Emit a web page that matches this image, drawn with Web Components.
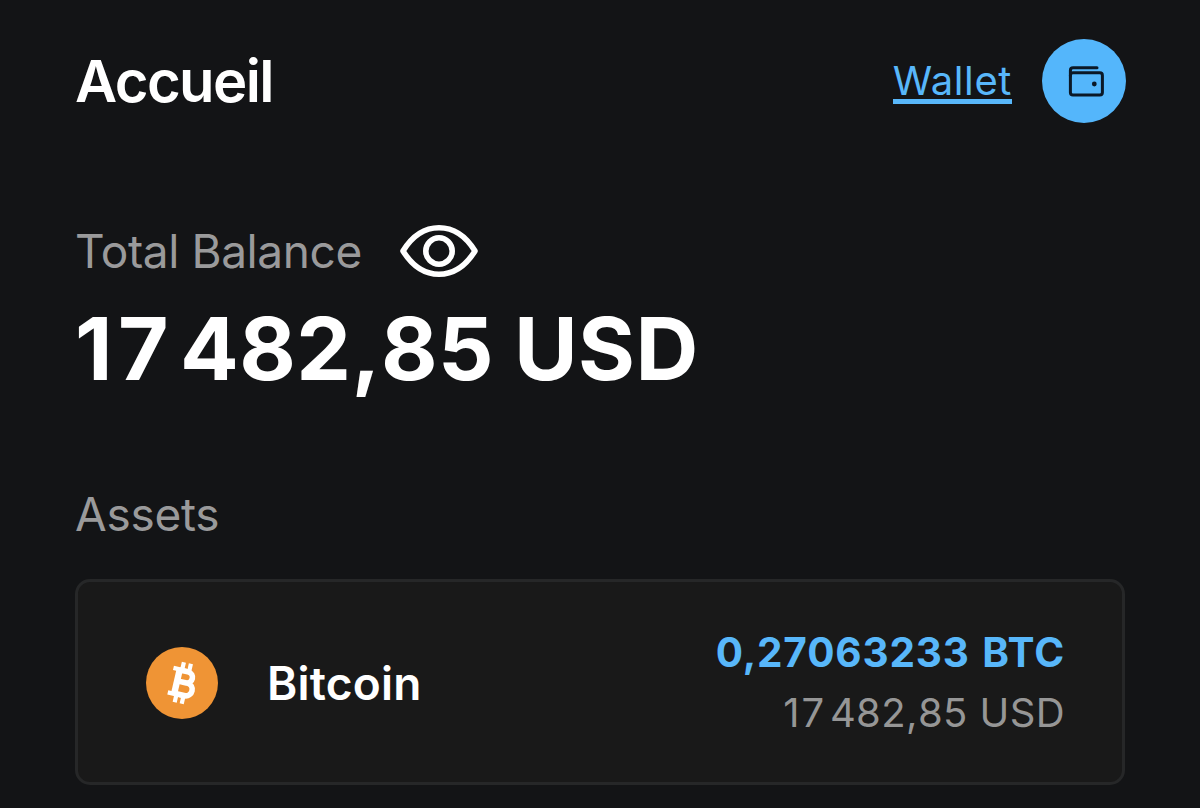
<!DOCTYPE html>
<html lang="fr">
<head>
<meta charset="utf-8">
<title>Accueil</title>
<style>
  body {
    margin: 0;
    background: #131416;
    font-family: Inter, "Liberation Sans", sans-serif;
  }
</style>
</head>
<body>
<wallet-home>
  <home-header slot="header" label="Wallet">Accueil</home-header>
  <total-balance slot="balance" label="Total Balance" amount="17&#8239;482,85 USD"></total-balance>
  <asset-list slot="assets" label="Assets">
    <asset-card name="Bitcoin" amount="0,27063233 BTC" value="17&#8239;482,85 USD">
      <bitcoin-icon></bitcoin-icon>
    </asset-card>
  </asset-list>
</wallet-home>

<script>
// small helper so every element does not repeat the shadow root code
class BaseElement extends HTMLElement {
  constructor() {
    super();
    this.attachShadow({ mode: "open" });
  }

  connectedCallback() {
    this.shadowRoot.innerHTML = this.render();
  }

  attr(name) {
    return this.getAttribute(name) || "";
  }

  // wraps the thousands and their separator so the spacing can be styled
  number(name) {
    return this.attr(name).replace(/^(\d+)\u202f/, "<span>$1</span><i>\u202f</i>");
  }
}

class WalletHome extends BaseElement {
  render() {
    return `
      <style>
        :host {
          display: flex;
          flex-direction: column;
          box-sizing: border-box;
          height: 808px;
          padding: 39px 75px 0;
          overflow: hidden;
          color: #fff;
        }
      </style>
      <slot name="header"></slot>
      <slot name="balance"></slot>
      <slot name="assets"></slot>
    `;
  }
}
customElements.define("wallet-home", WalletHome);

class HomeHeader extends BaseElement {
  render() {
    return `
      <style>
        :host { display: flex; align-items: center; height: 84px; margin-right: -1px; }
        h1 {
          flex: 1;
          margin: 0 0 1px;
          font-size: 58px;
          line-height: 70px;
          font-weight: 600;
          letter-spacing: -1.600px;
        }
        a {
          margin: 5px 30px 0 0;
          color: #58b7fa;
          font-size: 40px;
          line-height: 36px;
          letter-spacing: 0.6px;
          text-decoration: none;
          border-bottom: 5px solid #58b7fa;
        }
      </style>
      <h1><slot></slot></h1>
      <a>${this.attr("label")}</a>
      <wallet-icon></wallet-icon>
    `;
  }
}
customElements.define("home-header", HomeHeader);

class WalletIcon extends BaseElement {
  render() {
    return `
      <style>
        :host {
          display: block;
          width: 84px;
          height: 84px;
          border-radius: 50%;
          background: #54b6fb;
        }
        svg { display: block; }
      </style>
      <svg width="84" height="84" viewBox="0 0 84 84" fill="none" stroke="#0b1826" stroke-width="3" stroke-linecap="round" stroke-linejoin="round">
        <rect x="28.400" y="33.800" width="32" height="22.200" rx="2.600"/>
        <path d="M28.400 37V31.500q0-2.700 2.700-2.700H55"/>
        <circle cx="52.300" cy="45" r="2.400" fill="#0b1826" stroke="none"/>
      </svg>
    `;
  }
}
customElements.define("wallet-icon", WalletIcon);

class TotalBalance extends BaseElement {
  render() {
    return `
      <style>
        :host { display: block; margin-top: 98px; }
        .label { display: flex; align-items: center; gap: 37px; height: 60px; }
        .label span {
          color: #9a9a9b;
          font-size: 46px;
          line-height: 60px;
          letter-spacing: -0.4px;
        }
        .amount {
          margin-top: 15px;
          font-size: 87px;
          line-height: 106px;
          font-weight: 700;
          font-kerning: none;
          letter-spacing: 0.4px;
          word-spacing: -1px;
          white-space: nowrap;
        }
        .amount span { letter-spacing: 5.600px; }
        .amount i { letter-spacing: -8px; }
      </style>
      <div class="label">
        <span>${this.attr("label")}</span>
        <eye-icon></eye-icon>
      </div>
      <div class="amount">${this.number("amount")}</div>
    `;
  }
}
customElements.define("total-balance", TotalBalance);

class EyeIcon extends BaseElement {
  render() {
    return `
      <style>
        :host, svg { display: block; }
      </style>
      <svg width="80" height="54" viewBox="0 0 80 54" fill="none" stroke="#fff" stroke-width="5.600" stroke-linejoin="round">
        <path d="M4 27C13 12.500 25 3.800 40 3.800S67 12.500 76 27C67 41.500 55 50.200 40 50.200S13 41.500 4 27Z"/>
        <circle cx="40" cy="27" r="13.200"/>
      </svg>
    `;
  }
}
customElements.define("eye-icon", EyeIcon);

class AssetList extends BaseElement {
  render() {
    return `
      <style>
        :host { display: block; margin-top: 82px; }
        h2 {
          margin: 0 0 35px;
          color: #9a9a9b;
          font-size: 46px;
          line-height: 60px;
          font-weight: 400;
          letter-spacing: -0.3px;
        }
      </style>
      <h2>${this.attr("label")}</h2>
      <slot></slot>
    `;
  }
}
customElements.define("asset-list", AssetList);

class AssetCard extends BaseElement {
  render() {
    return `
      <style>
        :host {
          display: flex;
          align-items: center;
          box-sizing: border-box;
          height: 206px;
          padding: 2px 57px 0 68px;
          border: 3px solid #262728;
          border-radius: 15px;
          background: #191919;
        }
        .name {
          flex: 1;
          margin-left: 49px;
          font-size: 46px;
          line-height: 60px;
          font-weight: 600;
          letter-spacing: 0.2px;
        }
        .numbers { text-align: right; white-space: nowrap; }
        .amount {
          color: #58b7fa;
          font-size: 40.500px;
          line-height: 60px;
          font-weight: 700;
          letter-spacing: 0.85px;
          word-spacing: 2px;
        }
        .value {
          color: #969696;
          font-size: 40px;
          line-height: 60px;
          font-kerning: none;
          letter-spacing: 0.4px;
        }
        .value span { letter-spacing: 2px; }
        .value i { letter-spacing: -3.500px; }
      </style>
      <slot></slot>
      <div class="name">${this.attr("name")}</div>
      <div class="numbers">
        <div class="amount">${this.attr("amount")}</div>
        <div class="value">${this.number("value")}</div>
      </div>
    `;
  }
}
customElements.define("asset-card", AssetCard);

class BitcoinIcon extends BaseElement {
  render() {
    return `
      <style>
        :host, svg { display: block; }
      </style>
      <svg width="72" height="72" viewBox="0 0 72 72">
        <circle cx="36" cy="36" r="36" fill="#ef9435"/>
        <g transform="translate(36.800 36) rotate(13)" fill="none" stroke="#fff">
          <path stroke-width="4.200" d="M-3.600-20.500V-13M3.600-20.500V-13M-3.600 13V20.500M3.600 13V20.500"/>
          <path stroke-width="4.400" d="M-12.500-12.600H2.500M-12.500 12.600H3"/>
          <path stroke-width="6.400" d="M-6-13V13"/>
          <path stroke-width="5.600" d="M-6-12H2.500C10.200-12 10.200-.8 2.500-.8H-6H4C13-.8 13 12 4 12H-6"/>
        </g>
      </svg>
    `;
  }
}
customElements.define("bitcoin-icon", BitcoinIcon);
</script>
</body>
</html>
